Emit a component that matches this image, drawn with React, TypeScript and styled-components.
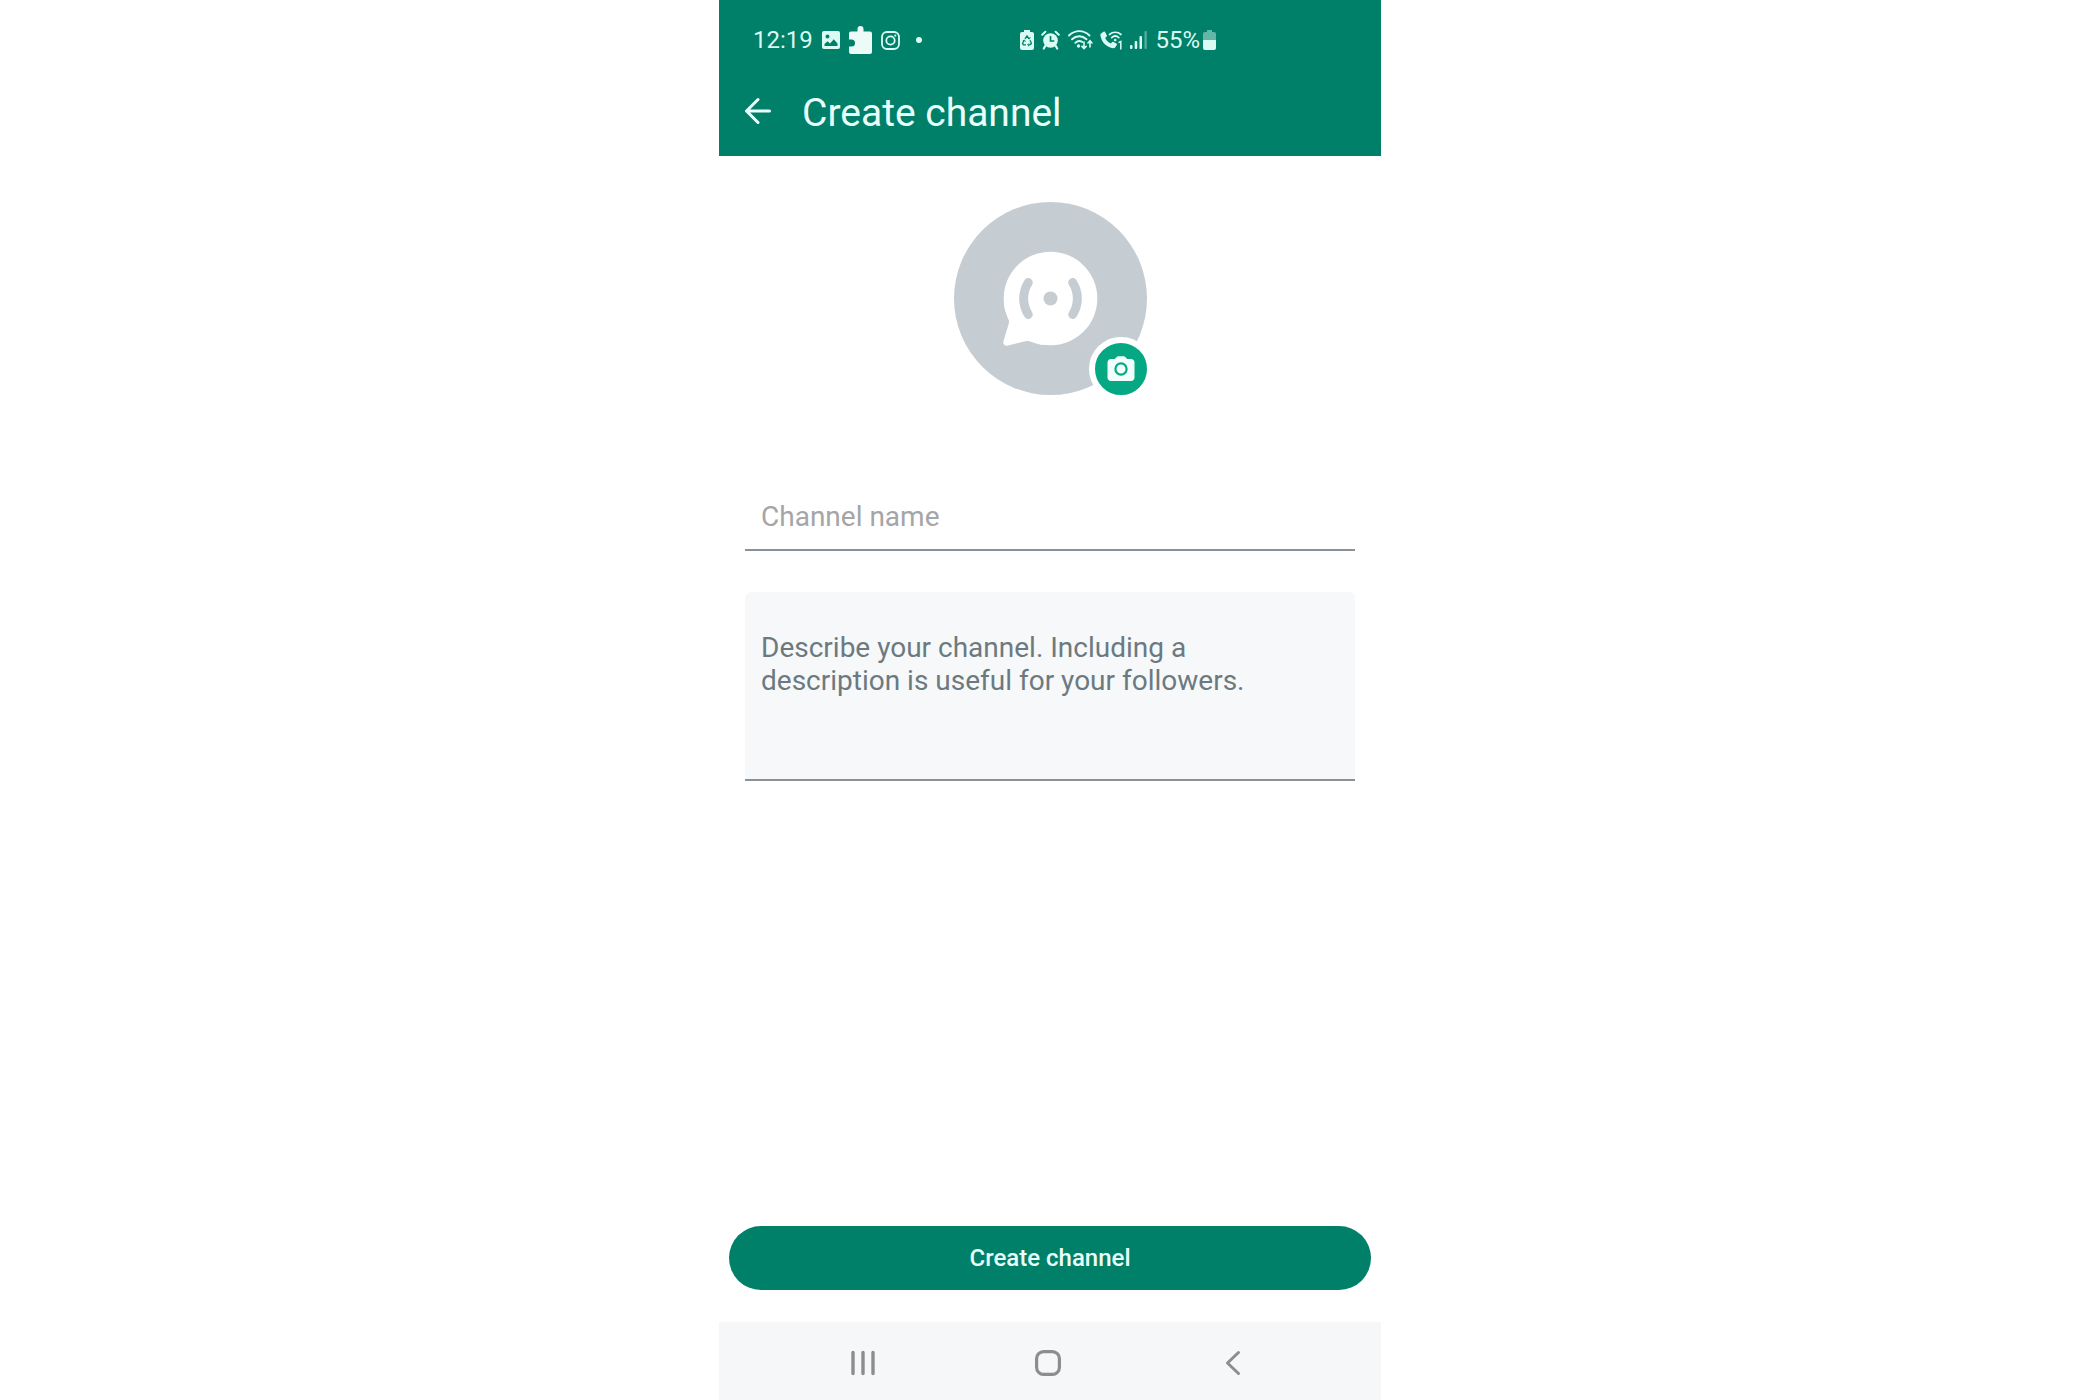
import React from "react";
import styled, { createGlobalStyle } from "styled-components";

const color = {
  brand: "#008069",
  accent: "#06a884",
  onBrand: "#e9fffb",
  statusIcon: "#d9fbf4",
  avatar: "#c6cdd2",
  panel: "#f6f8fa",
  nav: "#f6f7f9",
  navIcon: "#8c8d91",
  hint: "#a4a5a7",
  body: "#6c7a80",
  line: "#8a9297",
};

const GlobalStyle = createGlobalStyle`
  * { box-sizing: border-box; }
  body {
    margin: 0;
    background: #ffffff;
    font-family: Roboto, "Liberation Sans", sans-serif;
  }
  button, input, textarea { font-family: inherit; }
  svg { display: block; flex: none; }
`;

const Screen = styled.div`
  display: flex;
  flex-direction: column;
  max-width: 662px;
  min-height: 100vh;
  margin: 0 auto;
`;

const Header = styled.header`
  background: ${color.brand};
  color: ${color.onBrand};
`;

const StatusBar = styled.div`
  display: flex;
  justify-content: space-between;
  padding: 24px 165px 10px 34px;
  color: ${color.statusIcon};
  font-size: 24px;
  line-height: 32px;
`;

const StatusGroup = styled.div<{ $gap: number }>`
  display: flex;
  align-items: center;
  gap: ${(p) => p.$gap}px;
`;

const AppBar = styled.div`
  display: flex;
  align-items: center;
  gap: 21px;
  height: 90px;
  padding: 0 16px;
`;

const IconButton = styled.button`
  display: flex;
  align-items: center;
  justify-content: center;
  padding: 8px;
  border: 0;
  background: none;
  color: inherit;
  cursor: pointer;
`;

const Title = styled.h1`
  margin: 0;
  padding-top: 4px;
  font-size: 39px;
  font-weight: 400;
  line-height: 48px;
`;

const Form = styled.form`
  display: flex;
  flex: 1;
  flex-direction: column;
  padding-top: 46px;
`;

const Avatar = styled.div`
  position: relative;
  align-self: center;
  width: 193px;
  height: 193px;
  border-radius: 50%;
  background: ${color.avatar};
`;

const PhotoButton = styled.button`
  position: absolute;
  right: -6px;
  bottom: -6px;
  display: flex;
  align-items: center;
  justify-content: center;
  width: 64px;
  height: 64px;
  padding: 0;
  border: 6px solid #ffffff;
  border-radius: 50%;
  background: ${color.accent};
  color: #f0fffb;
  cursor: pointer;
`;

const Fields = styled.div`
  display: flex;
  flex-direction: column;
  gap: 41px;
  padding: 91px 26px 32px;
`;

const NameInput = styled.input`
  width: 100%;
  height: 65px;
  padding: 14px 16px 16px;
  border: 0;
  border-bottom: 2px solid ${color.line};
  background: none;
  color: #111b21;
  font-size: 28px;
  line-height: 33px;
  outline: none;
  &::placeholder { color: ${color.hint}; opacity: 1; }
`;

const DescriptionInput = styled.textarea`
  display: block;
  width: 100%;
  height: 189px;
  padding: 39px 48px 16px 16px;
  border: 0;
  border-bottom: 2px solid ${color.line};
  border-radius: 6px 6px 0 0;
  background: ${color.panel};
  color: #111b21;
  font-size: 28px;
  line-height: 33px;
  resize: none;
  outline: none;
  &::placeholder { color: ${color.body}; opacity: 1; }
`;

const SubmitButton = styled.button`
  height: 64px;
  margin: auto 10px 32px;
  border: 0;
  border-radius: 32px;
  background: ${color.brand};
  color: ${color.onBrand};
  font-size: 24px;
  font-weight: 500;
  line-height: 32px;
  cursor: pointer;
`;

const SystemNav = styled.nav`
  display: grid;
  grid-template-columns: repeat(3, 1fr);
  height: 78px;
  padding: 4px 56px 0 52px;
  background: ${color.nav};
  color: ${color.navIcon};
`;

const PictureIcon = () => (
  <svg width="18" height="18" viewBox="0 0 18 18" aria-hidden="true">
    <path
      fill="currentColor"
      fillRule="evenodd"
      d="M2 0h14a2 2 0 0 1 2 2v14a2 2 0 0 1-2 2H2a2 2 0 0 1-2-2V2a2 2 0 0 1 2-2zM2.500 15h13v-2.500L11.800 8.300 8 12.600 5.600 10.300 2.500 13zM5.500 3.600a2 2 0 1 0 0 4 2 2 0 0 0 0-4z"
    />
  </svg>
);

const PuzzleIcon = () => (
  <svg width="23" height="28" viewBox="0 0 23 28" aria-hidden="true">
    <path
      fill="#eefaf8"
      d="M2 5.500h6.500V3a3 3 0 0 1 6 0v2.500H21a2 2 0 0 1 2 2V26a2 2 0 0 1-2 2H2a2 2 0 0 1-2-2v-5.500h2.500a3.500 3.500 0 0 0 0-7H0v-6a2 2 0 0 1 2-2z"
    />
  </svg>
);

const CameraOutlineIcon = () => (
  <svg width="19" height="19" viewBox="0 0 19 19" fill="none" stroke="currentColor" strokeWidth="1.800" aria-hidden="true">
    <rect x="1" y="1" width="17" height="17" rx="5" />
    <circle cx="9.500" cy="9.500" r="4.200" />
    <circle cx="14.300" cy="4.600" r="1.100" fill="currentColor" stroke="none" />
  </svg>
);

const MoreDot = () => (
  <svg width="20" height="8" viewBox="0 0 20 8" aria-hidden="true">
    <circle cx="10" cy="4" r="3" fill="currentColor" />
  </svg>
);

const BatterySaverIcon = () => (
  <svg width="14" height="20" viewBox="0 0 14 20" aria-hidden="true">
    <path fill="currentColor" d="M4 0h6v2h2a2 2 0 0 1 2 2v14a2 2 0 0 1-2 2H2a2 2 0 0 1-2-2V4a2 2 0 0 1 2-2h2z" />
    <g fill="none" stroke={color.brand} strokeWidth="1.300" strokeLinejoin="round">
      <path d="M5 8.800 7 5.800l2 3M10 10.200l1.500 3.300-1.500 1.300H8M6 14.800H3.500L2.500 13.500 4.200 10.200" />
      <path d="M7.600 7.800 9.400 9l.8-2M9 13.400l-1.400 1.400L9 16.200M2.800 10.800l1.600-.8 1 1.700" strokeWidth="0.900" />
    </g>
  </svg>
);

const AlarmIcon = () => (
  <svg width="19" height="20" viewBox="0 0 19 20" aria-hidden="true">
    <path d="M4.500 15.500l-1.700 3M14.500 15.500l1.700 3" stroke="currentColor" strokeWidth="2.200" strokeLinecap="round" />
    <circle cx="9.500" cy="10.500" r="7.300" fill="currentColor" />
    <path d="M1.200 4.800 4.400 1.800M17.800 4.800 14.600 1.800" stroke="currentColor" strokeWidth="2" strokeLinecap="round" />
    <path d="M9.500 6v5h3.800" fill="none" stroke={color.brand} strokeWidth="1.600" />
  </svg>
);

const WifiIcon = () => (
  <svg width="26" height="20" viewBox="0 0 26 20" fill="none" stroke="currentColor" strokeWidth="1.900" strokeLinecap="round" aria-hidden="true">
    <path d="M2 5.500C8-.3 16.500-.3 22.500 5.500M5 9.300c4.300-4 10.200-4 14.500 0M8.300 12.800c2-2 4.800-2.300 7-.8" />
    <circle cx="11.500" cy="16" r="1.700" fill="currentColor" stroke="none" />
    <path d="M17 12v6.500M14.900 16.400l2.100 2.200 2.100-2.200M23 17v-6M21 13l2-2.200 2 2.200" strokeWidth="1.600" />
  </svg>
);

const WifiCallIcon = () => (
  <svg width="23" height="20" viewBox="0 0 23 20" fill="none" aria-hidden="true">
    <path
      fill="currentColor"
      d="M1 3.600 3.600 1.800c.6-.4 1.300-.2 1.600.4l1.600 3c.3.600.1 1.200-.4 1.600L5.200 7.900c1.200 2.500 3 4.300 5.600 5.600l1.200-1.300c.4-.5 1-.6 1.600-.3l2.800 1.600c.6.400.8 1 .4 1.600l-1.700 2.400c-.4.500-1 .8-1.700.7C6.500 17.400 1.300 12 .4 5.200.300 4.500.500 4 1 3.600z"
    />
    <path d="M9.500 4.500c3.300-3 8.200-3 11.500 0M11.700 7.600c2.100-1.900 5-1.900 7.100 0" stroke="currentColor" strokeWidth="1.700" strokeLinecap="round" />
    <circle cx="15.200" cy="10" r="1.300" fill="currentColor" />
    <path d="M18.500 12.700 20.800 11.500V19.500" stroke="currentColor" strokeWidth="1.500" />
  </svg>
);

const SignalIcon = () => (
  <svg width="18" height="20" viewBox="0 0 18 20" fill="currentColor" aria-hidden="true">
    <rect x="0" y="15" width="2.500" height="4" rx="1" />
    <rect x="4.700" y="11" width="2.500" height="8" rx="1" />
    <rect x="9.500" y="6" width="2.500" height="13" rx="1" />
    <rect x="14.500" y="1" width="2.200" height="18" rx="1" opacity="0.400" />
  </svg>
);

const BatteryIcon = () => (
  <svg width="13" height="20" viewBox="0 0 13 20" fill="currentColor" aria-hidden="true">
    <path d="M4 0h5v2h2a2 2 0 0 1 2 2v6H0V4a2 2 0 0 1 2-2h2z" opacity="0.450" />
    <path d="M0 10h13v8a2 2 0 0 1-2 2H2a2 2 0 0 1-2-2z" />
  </svg>
);

const BackArrowIcon = () => (
  <svg width="30" height="30" viewBox="0 0 30 30" fill="none" stroke="currentColor" strokeWidth="3" strokeLinecap="round" strokeLinejoin="round" aria-hidden="true">
    <path d="M26.500 15H3.500M15 3.500 3.500 15 15 26.500" />
  </svg>
);

const ChannelIcon = () => (
  <svg width="193" height="193" viewBox="0 0 193 193" fill="none" aria-hidden="true">
    <circle cx="96.500" cy="96.500" r="46.800" fill="#fff" />
    <path
      fill="#fff"
      d="M50 102c1 7 3 11.500 4.500 15 .8 2 .6 3.400 0 5.500l-5 16.500c-1 3.500 1.500 5.300 4.500 4.500l17.500-4.300c2-.5 3.500-.3 5.500.5 4 1.600 8 2.800 12 3.300L97 100z"
    />
    <circle cx="96.500" cy="96.500" r="7" fill={color.avatar} />
    <path d="M74.300 80.500c-6.200 10-6.200 22 0 32M118.700 80.500c6.200 10 6.200 22 0 32" stroke={color.avatar} strokeWidth="9" strokeLinecap="round" />
  </svg>
);

const CameraIcon = () => (
  <svg width="28" height="26" viewBox="0 0 28 26" fill="none" aria-hidden="true">
    <path
      fill="currentColor"
      d="M9.500 1.200C10 .500 10.700.200 11.500.200h5c.8 0 1.500.3 2 1L20.200 3H24c2 0 3.500 1.500 3.500 3.500V21.500c0 2-1.500 3.500-3.500 3.500H4C2 25 .500 23.500.500 21.500V6.500C.500 4.500 2 3 4 3h3.800z"
    />
    <circle cx="14" cy="13" r="5.600" stroke={color.accent} strokeWidth="2.200" />
  </svg>
);

const RecentsIcon = () => (
  <svg width="24" height="26" viewBox="0 0 24 26" stroke="currentColor" strokeWidth="3.400" strokeLinecap="round" aria-hidden="true">
    <path d="M2 2.500v21M12 2.500v21M22 2.500v21" />
  </svg>
);

const HomeIcon = () => (
  <svg width="26" height="26" viewBox="0 0 26 26" fill="none" stroke="currentColor" strokeWidth="3.200" aria-hidden="true">
    <rect x="1.600" y="1.600" width="22.800" height="22.800" rx="7" />
  </svg>
);

const ChevronIcon = () => (
  <svg width="16" height="26" viewBox="0 0 16 26" fill="none" stroke="currentColor" strokeWidth="3" strokeLinecap="round" strokeLinejoin="round" aria-hidden="true">
    <path d="M13.500 2.500 2.500 13 13.500 23.500" />
  </svg>
);

export default function App() {
  return (
    <Screen>
      <GlobalStyle />
      <Header>
        <StatusBar>
          <StatusGroup $gap={9}>
            <span>12:19</span>
            <PictureIcon />
            <PuzzleIcon />
            <CameraOutlineIcon />
            <MoreDot />
          </StatusGroup>
          <StatusGroup $gap={7}>
            <BatterySaverIcon />
            <AlarmIcon />
            <WifiIcon />
            <WifiCallIcon />
            <SignalIcon />
            <StatusGroup $gap={3}>
              <span>55%</span>
              <BatteryIcon />
            </StatusGroup>
          </StatusGroup>
        </StatusBar>
        <AppBar>
          <IconButton type="button" aria-label="Back">
            <BackArrowIcon />
          </IconButton>
          <Title>Create channel</Title>
        </AppBar>
      </Header>
      <Form onSubmit={(event) => event.preventDefault()}>
        <Avatar>
          <ChannelIcon />
          <PhotoButton type="button" aria-label="Add channel photo">
            <CameraIcon />
          </PhotoButton>
        </Avatar>
        <Fields>
          <NameInput type="text" aria-label="Channel name" placeholder="Channel name" />
          <DescriptionInput
            aria-label="Channel description"
            placeholder="Describe your channel. Including a description is useful for your followers."
          />
        </Fields>
        <SubmitButton type="submit">Create channel</SubmitButton>
      </Form>
      <SystemNav aria-label="System navigation">
        <IconButton type="button" aria-label="Recent apps">
          <RecentsIcon />
        </IconButton>
        <IconButton type="button" aria-label="Home">
          <HomeIcon />
        </IconButton>
        <IconButton type="button" aria-label="Back to previous screen">
          <ChevronIcon />
        </IconButton>
      </SystemNav>
    </Screen>
  );
}
